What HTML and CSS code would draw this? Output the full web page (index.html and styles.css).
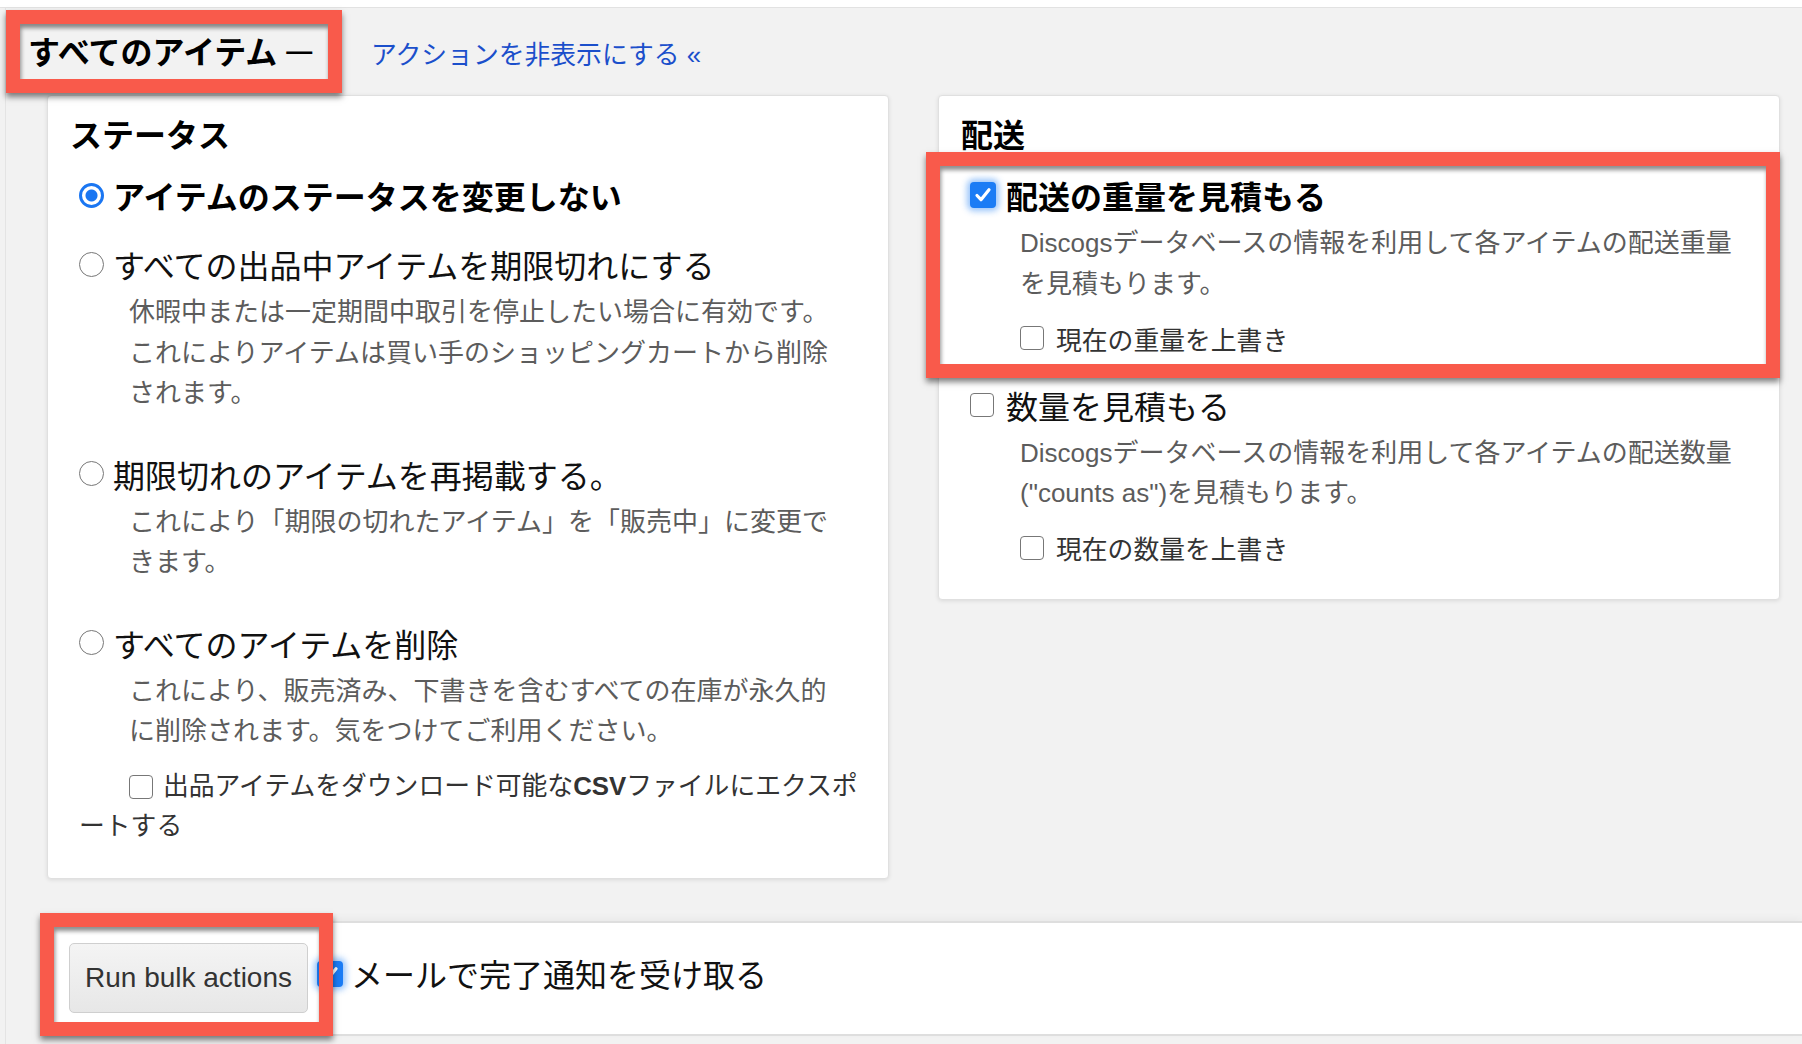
FILE: index.html
```html
<!DOCTYPE html>
<html lang="ja">
<head>
    <meta charset="utf-8">
    <title>一括操作</title>
    <link rel="stylesheet" href="styles.css">
</head>
<body>
<div class="topbar"></div>
<div class="page">
    <div class="header">
        <h2 class="all-items highlight">すべてのアイテム <span class="dash">—</span></h2>
        <a class="toggle-link" href="#">アクションを非表示にする «</a>
    </div>

    <div class="cards">
        <div class="card">
            <h3>ステータス</h3>
            <div class="option">
                <label class="opt-label strong"><span class="radio checked"></span>アイテムのステータスを変更しない</label>
            </div>
            <div class="option">
                <label class="opt-label"><span class="radio"></span>すべての出品中アイテムを期限切れにする</label>
                <p class="desc">休暇中または一定期間中取引を停止したい場合に有効です。これによりアイテムは買い手のショッピングカートから削除されます。</p>
            </div>
            <div class="option">
                <label class="opt-label"><span class="radio"></span>期限切れのアイテムを再掲載する。</label>
                <p class="desc">これにより「期限の切れたアイテム」を「販売中」に変更できます。</p>
            </div>
            <div class="option">
                <label class="opt-label"><span class="radio"></span>すべてのアイテムを削除</label>
                <p class="desc">これにより、販売済み、下書きを含むすべての在庫が永久的に削除されます。気をつけてご利用ください。</p>
                <p class="export"><span class="check inline"></span>出品アイテムをダウンロード可能な<b>CSV</b>ファイルにエクスポートする</p>
            </div>
        </div>

        <div class="card">
            <h3>配送</h3>
            <div class="option highlight weight-box">
                <label class="opt-label strong">
                    <span class="check checked"><svg viewBox="0 0 26 26" width="26" height="26"><path d="M7 13.5l4 4.2 8-10" fill="none" stroke="#fff" stroke-width="3.2" stroke-linecap="round" stroke-linejoin="round"/></svg></span>配送の重量を見積もる
                </label>
                <p class="desc">Discogsデータベースの情報を利用して各アイテムの配送重量を見積もります。</p>
                <label class="sub"><span class="check"></span>現在の重量を上書き</label>
            </div>
            <div class="option">
                <label class="opt-label"><span class="check"></span>数量を見積もる</label>
                <p class="desc">Discogsデータベースの情報を利用して各アイテムの配送数量("counts as")を見積もります。</p>
                <label class="sub"><span class="check"></span>現在の数量を上書き</label>
            </div>
        </div>
    </div>

    <div class="footer-bar">
        <div class="run-wrap highlight">
            <button class="run-button">Run bulk actions</button>
        </div>
        <span class="check checked"><svg viewBox="0 0 26 26" width="26" height="26"><path d="M7 13.5l4 4.2 8-10" fill="none" stroke="#fff" stroke-width="3.2" stroke-linecap="round" stroke-linejoin="round"/></svg></span>
        <span class="notify">メールで完了通知を受け取る</span>
    </div>
</div>
</body>
</html>
```

FILE: styles.css
```css
body {
    margin: 0;
    background-color: #f2f2f2;
    color: #111;
    font-family: "Liberation Sans", "Noto Sans CJK JP", sans-serif;
}

.topbar {
    height: 7px;
    background-color: #ffffff;
    border-bottom: 1px solid #e2e2e2;
}

.page {
    margin-left: 5px;
    border-left: 1px solid #e4e4e4;
    padding-top: 16px;
    padding-bottom: 9px;
}

/* header row */
.header {
    display: flex;
    align-items: center;
    padding-left: 14px;
}

.all-items {
    box-sizing: border-box;
    width: 310px;
    height: 56px;
    margin: 0;
    padding-left: 8px;
    font-size: 32px;
    line-height: 54px;
    font-weight: bold;
    color: #000;
    white-space: nowrap;
}

.all-items .dash {
    font-size: 26px;
    vertical-align: 4px;
}

.toggle-link {
    margin-left: 41px;
    font-size: 25.8px;
    color: #1b4fcb;
    text-decoration: none;
}

/* red annotation frames */
.highlight {
    position: relative;
}

.highlight::after {
    content: "";
    position: absolute;
    border: 14px solid #f95a4b;
    box-shadow: 0 4px 6px rgba(0, 0, 0, .5), inset 1px 4px 4px rgba(0, 0, 0, .45);
    pointer-events: none;
    z-index: 2;
}

.all-items::after {
    left: -14px;
    right: -12px;
    top: -14px;
    bottom: -13px;
}

.weight-box::after {
    left: -44px;
    right: -23px;
    top: -20px;
    bottom: -19px;
}

.run-wrap::after {
    left: -29px;
    right: -25px;
    top: -30px;
    bottom: -23px;
}

/* cards */
.cards {
    display: grid;
    grid-template-columns: 1fr 1fr;
    column-gap: 49px;
    align-items: start;
    margin: 15px 22px 0 41px;
}

.card {
    background-color: #ffffff;
    border: 1px solid #e0e0e0;
    border-radius: 4px;
    box-shadow: 0 1px 4px rgba(0, 0, 0, .1);
    padding: 18px 22px 31px 22px;
}

.card h3 {
    margin: 0 0 14px;
    font-size: 32px;
    line-height: 44px;
    font-weight: bold;
    color: #000;
}

.option {
    display: flow-root;
    margin-left: 9px;
}

.option + .option {
    margin-top: 23px;
}

.opt-label {
    display: flex;
    align-items: center;
    height: 46px;
    font-size: 32px;
    white-space: nowrap;
}

.opt-label.strong {
    font-weight: bold;
    color: #000;
}

.desc {
    margin: 5px 15px 14px 50px;
    font-size: 26px;
    line-height: 40.5px;
    color: #5c5c5c;
}

.sub {
    display: flex;
    align-items: center;
    height: 40.5px;
    margin-left: 50px;
    font-size: 25.8px;
    color: #333;
}

.export {
    margin: 0;
    font-size: 25.8px;
    line-height: 40.5px;
    text-indent: 50px;
    color: #333;
    line-break: loose;
}

/* form controls */
.radio {
    flex: none;
    box-sizing: border-box;
    width: 25px;
    height: 25px;
    margin-right: 9px;
    border: 1.6px solid #777;
    border-radius: 50%;
    background-color: #fff;
}

.radio.checked {
    border: 3px solid #1a76f2;
    background: radial-gradient(circle, #1a76f2 0 5.5px, #fff 6.5px);
}

.check {
    flex: none;
    display: inline-flex;
    box-sizing: border-box;
    width: 24px;
    height: 24px;
    margin-right: 12px;
    border: 1.6px solid #777;
    border-radius: 4px;
    background-color: #fff;
}

.check.inline {
    vertical-align: -4px;
    margin-right: 10px;
    text-indent: 0;
}

.check.checked {
    width: 26px;
    height: 26px;
    margin-right: 10px;
    border: 0;
    background-color: #1b7cf5;
    box-shadow: 0 0 6px 3px rgba(27, 124, 245, .45);
}

/* bottom bar */
.footer-bar {
    display: flex;
    align-items: center;
    height: 111px;
    margin: 42px 0 0 41px;
    padding-left: 22px;
    background-color: #ffffff;
    border-top: 2px solid #dedede;
    border-bottom: 2px solid #dedede;
    box-shadow: 0 -3px 8px rgba(0, 0, 0, .04);
}

.run-button {
    height: 70px;
    padding: 0 15px;
    font-family: "Liberation Sans", sans-serif;
    font-size: 28px;
    color: #333;
    background: linear-gradient(#f4f4f4, #e7e7e7);
    border: 1px solid #cfcfcf;
    border-radius: 5px;
}

.footer-bar .check {
    margin-left: 9px;
    margin-right: 8px;
    margin-bottom: 8px;
}

.notify {
    font-size: 32px;
    margin-bottom: 10px;
}
```
